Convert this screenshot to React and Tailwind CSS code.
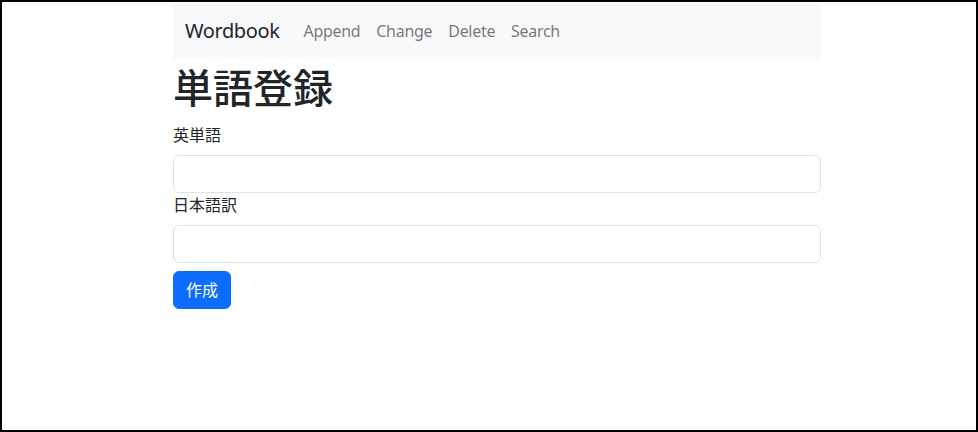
export default function App() {
  return (
    <div className="w-[978px] h-[432px] border-2 border-black bg-white overflow-hidden text-[#212529] font-['Noto_Sans','Noto_Sans_CJK_JP',sans-serif]">
      <div className="ml-[171px] w-[648px] pt-[1px]">
        <nav className="h-[56px] bg-[#f8f9fa] flex items-center px-3">
          <span className="text-[20px] leading-[30px] mr-4 text-[#212529] tracking-[-0.4px]">Wordbook</span>
          <div className="flex text-[16px] leading-6 text-[rgba(0,0,0,0.55)] tracking-[-0.3px]">
            <span className="px-2">Append</span>
            <span className="px-2">Change</span>
            <span className="px-2">Delete</span>
            <span className="px-2">Search</span>
          </div>
        </nav>
        <h1 className="text-[40px] leading-[48px] font-medium mt-[5px] mb-[11px]">単語登録</h1>
        <div className="flex flex-col">
          <label className="text-[16px] leading-6 mb-2">英単語</label>
          <div className="h-[38px] border border-[#dee2e6] rounded-md"></div>
          <label className="text-[16px] leading-6 mb-2">日本語訳</label>
          <div className="h-[38px] border border-[#dee2e6] rounded-md"></div>
          <div className="mt-2">
            <button className="h-[38px] px-3 border border-[#0d6efd] bg-[#0d6efd] text-white rounded-md text-[16px] leading-6">作成</button>
          </div>
        </div>
      </div>
    </div>
  );
}
